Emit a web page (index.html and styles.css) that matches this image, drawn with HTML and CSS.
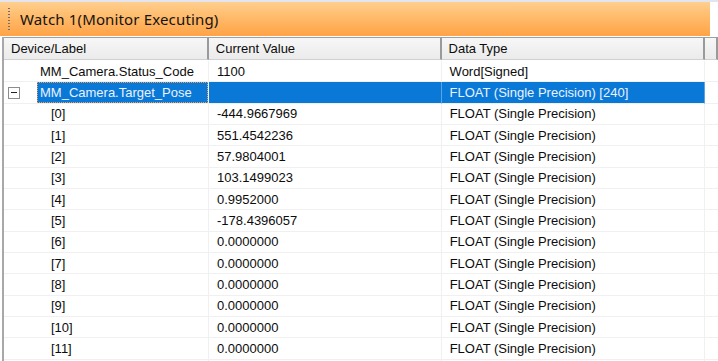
FILE: index.html
```html
<!DOCTYPE html>
<html lang="en">
<head>
    <meta charset="UTF-8">
    <title>Watch 1</title>
    <link rel="stylesheet" href="styles.css">
</head>
<body>
    <div class="watch-window">
        <div class="title-bar">
            <span class="grip"></span>
            <span class="title">Watch 1(Monitor Executing)</span>
        </div>
        <div class="grid">
            <div class="row header">
                <div class="cell c1">Device/Label</div>
                <div class="cell c2">Current Value</div>
                <div class="cell c3">Data Type</div>
                <div class="cell c4"></div>
            </div>
            <div class="row">
                <div class="cell c1"><span class="label">MM_Camera.Status_Code</span></div>
                <div class="cell c2">1100</div>
                <div class="cell c3">Word[Signed]</div>
                <div class="cell c4"></div>
            </div>
            <div class="row selected">
                <div class="cell c1">
                    <span class="expander"></span>
                    <span class="label focus">MM_Camera.Target_Pose</span>
                </div>
                <div class="cell c2"></div>
                <div class="cell c3">FLOAT (Single Precision) [240]</div>
                <div class="cell c4"></div>
            </div>
            <div class="row"><div class="cell c1 child">[0]</div><div class="cell c2">-444.9667969</div><div class="cell c3">FLOAT (Single Precision)</div><div class="cell c4"></div></div>
            <div class="row"><div class="cell c1 child">[1]</div><div class="cell c2">551.4542236</div><div class="cell c3">FLOAT (Single Precision)</div><div class="cell c4"></div></div>
            <div class="row"><div class="cell c1 child">[2]</div><div class="cell c2">57.9804001</div><div class="cell c3">FLOAT (Single Precision)</div><div class="cell c4"></div></div>
            <div class="row"><div class="cell c1 child">[3]</div><div class="cell c2">103.1499023</div><div class="cell c3">FLOAT (Single Precision)</div><div class="cell c4"></div></div>
            <div class="row"><div class="cell c1 child">[4]</div><div class="cell c2">0.9952000</div><div class="cell c3">FLOAT (Single Precision)</div><div class="cell c4"></div></div>
            <div class="row"><div class="cell c1 child">[5]</div><div class="cell c2">-178.4396057</div><div class="cell c3">FLOAT (Single Precision)</div><div class="cell c4"></div></div>
            <div class="row"><div class="cell c1 child">[6]</div><div class="cell c2">0.0000000</div><div class="cell c3">FLOAT (Single Precision)</div><div class="cell c4"></div></div>
            <div class="row"><div class="cell c1 child">[7]</div><div class="cell c2">0.0000000</div><div class="cell c3">FLOAT (Single Precision)</div><div class="cell c4"></div></div>
            <div class="row"><div class="cell c1 child">[8]</div><div class="cell c2">0.0000000</div><div class="cell c3">FLOAT (Single Precision)</div><div class="cell c4"></div></div>
            <div class="row"><div class="cell c1 child">[9]</div><div class="cell c2">0.0000000</div><div class="cell c3">FLOAT (Single Precision)</div><div class="cell c4"></div></div>
            <div class="row"><div class="cell c1 child">[10]</div><div class="cell c2">0.0000000</div><div class="cell c3">FLOAT (Single Precision)</div><div class="cell c4"></div></div>
            <div class="row"><div class="cell c1 child">[11]</div><div class="cell c2">0.0000000</div><div class="cell c3">FLOAT (Single Precision)</div><div class="cell c4"></div></div>
            <div class="row"><div class="cell c1 child"></div><div class="cell c2"></div><div class="cell c3"></div><div class="cell c4"></div></div>
        </div>
    </div>
</body>
</html>
```

FILE: styles.css
```css
body {
    margin: 0;
    padding: 0;
    background-color: #ffffff;
    font-family: "Liberation Sans", Arial, sans-serif;
    overflow: hidden;
}

.watch-window {
    width: 718px;
    height: 361px;
    overflow: hidden;
    border-top: 2px solid #e4e4ee;
    box-sizing: border-box;
}

.title-bar {
    width: 710px;
    height: 34px;
    display: flex;
    align-items: center;
    background: linear-gradient(to bottom, #ffcf8f 0%, #ffb866 50%, #ffa347 100%);
}

.grip {
    width: 2px;
    height: 22px;
    margin-left: 8px;
    margin-right: 10px;
    background-image: linear-gradient(to bottom, #6e6e6e 50%, transparent 50%);
    background-size: 2px 3px;
}

.title {
    font-family: "Noto Sans", sans-serif;
    font-size: 15px;
    color: #141414;
    letter-spacing: 0.15px;
}

.grid {
    margin-top: 1px;
    margin-left: 2px;
    border-left: 2px solid #a8a8a8;
}

.row {
    display: flex;
    height: 21.35px;
    font-size: 13px;
    color: #0c0c0c;
}

.cell {
    box-sizing: border-box;
    display: flex;
    align-items: center;
    border-bottom: 1px solid #f0f0f0;
    border-right: 1px solid #f0f0f0;
    white-space: nowrap;
    overflow: hidden;
}

.c1 { width: 206px; padding-left: 34px; }
.c2 { width: 234px; padding-left: 8px; }
.c3 { width: 265px; padding-left: 8px; }
.c4 { width: 13px; border-right: none; }

.c1.child { padding-left: 47px; }

.header {
    height: 23px;
    margin-bottom: 1px;
}

.header .cell {
    background: linear-gradient(to bottom, #f7f7f7, #ebebeb);
    border-top: 1px solid #a0a0a0;
    border-bottom: 1px solid #d0d0d0;
    border-right: 2px solid #9a9a9a;
    padding-left: 7px;
}

.header .c1 { padding-left: 7px; }

.label {
    padding: 1px 2px;
}

.selected .c2,
.selected .c3,
.selected .label {
    background-color: #0a78d6;
    color: #eaf3ff;
}

.selected .c1 {
    padding-left: 4px;
}

.selected .c2,
.selected .c3 {
    border-right-color: #5aa3e4;
}

.label.focus {
    height: 100%;
    box-sizing: border-box;
    display: flex;
    align-items: center;
    flex: 1;
    border: 1px dotted #f0a050;
    padding-left: 2px;
}

.expander {
    width: 12px;
    height: 12px;
    box-sizing: border-box;
    border: 1px solid #8c8c8c;
    margin-right: 17px;
    margin-left: 0;
    position: relative;
    background: #ffffff;
}

.expander::after {
    content: "";
    position: absolute;
    left: 2px;
    right: 2px;
    top: 4px;
    height: 1px;
    background: #222222;
}
```
